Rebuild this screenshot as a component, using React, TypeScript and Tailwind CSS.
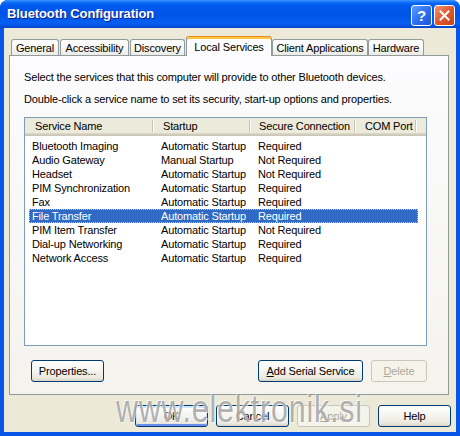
import type { ReactNode } from "react";

const services = [
  ["Bluetooth Imaging", "Automatic Startup", "Required"],
  ["Audio Gateway", "Manual Startup", "Not Required"],
  ["Headset", "Automatic Startup", "Not Required"],
  ["PIM Synchronization", "Automatic Startup", "Required"],
  ["Fax", "Automatic Startup", "Required"],
  ["File Transfer", "Automatic Startup", "Required"],
  ["PIM Item Transfer", "Automatic Startup", "Not Required"],
  ["Dial-up Networking", "Automatic Startup", "Required"],
  ["Network Access", "Automatic Startup", "Required"],
];

const tabs = [
  { label: "General", width: "w-[48px]" },
  { label: "Accessibility", width: "w-[69px]" },
  { label: "Discovery", width: "w-[55px]" },
  { label: "Local Services", width: "w-[86px]", active: true },
  { label: "Client Applications", width: "w-[96px]" },
  { label: "Hardware", width: "w-[56px]" },
];

function XpButton({
  children,
  width,
  disabled,
  isDefault,
}: {
  children: ReactNode;
  width: string;
  disabled?: boolean;
  isDefault?: boolean;
}) {
  const base = `${width} flex h-[22px] items-center justify-center rounded-[3px] border text-[11px] leading-none`;
  if (disabled) {
    return (
      <div
        className={`${base} border-[#c9c7ba] bg-[#f5f4ea] text-[#aca899]`}
      >
        {children}
      </div>
    );
  }
  return (
    <div
      className={`${base} border-[#003c74] bg-[linear-gradient(to_bottom,#ffffff_0%,#f6f5f0_45%,#ebe8de_85%,#d8d2c6_100%)] text-black ${
        isDefault
          ? "shadow-[inset_0_1px_0_1px_#cee7ff,inset_0_-1px_0_1px_#6b8eec]"
          : ""
      }`}
    >
      {children}
    </div>
  );
}

function HeaderCell({ label, width, pad }: { label: string; width: string; pad: string }) {
  return (
    <div className={`${width} flex h-full items-center justify-between ${pad}`}>
      <span>{label}</span>
      <span className="h-[12px] w-[2px] border-l border-r border-l-[#c7c5b2] border-r-white" />
    </div>
  );
}

export default function App() {
  return (
    <div
      className="relative h-[436px] w-[460px] overflow-hidden bg-white text-[11px] tracking-[-0.15px] text-black"
      style={{ fontFamily: '"Liberation Sans", Arial, sans-serif' }}
    >
      <div className="flex h-full flex-col rounded-t-[8px] bg-[#0856e8]">
        {/* title bar */}
        <div className="flex h-[28px] items-center justify-between rounded-t-[8px] bg-[linear-gradient(to_bottom,#3d95ff_0%,#0a6af8_10%,#0058ee_22%,#0054e8_55%,#0660f2_82%,#0550e0_93%,#0542c9_100%)] pl-[7px] pr-[5px]">
          <span className="text-[13px] font-bold tracking-[-0.1px] text-white [text-shadow:1px_1px_0_#0a1e8a]">
            Bluetooth Configuration
          </span>
          <div className="flex gap-[2px] pt-[3px]">
            <div className="flex h-[21px] w-[21px] items-center justify-center rounded-[3px] border border-white bg-[linear-gradient(135deg,#5d9dff_0%,#2a6cf0_55%,#1d55d8_100%)] text-[15px] font-bold leading-none text-white">
              ?
            </div>
            <div className="flex h-[21px] w-[21px] items-center justify-center rounded-[3px] border border-white bg-[linear-gradient(135deg,#f0937a_0%,#e0582e_50%,#c9411a_100%)]">
              <svg width="11" height="11" viewBox="0 0 11 11">
                <path d="M1.5 1.5 L9.5 9.5 M9.5 1.5 L1.5 9.5" stroke="white" strokeWidth="2" strokeLinecap="square" />
              </svg>
            </div>
          </div>
        </div>

        {/* client area */}
        <div className="mx-[4px] mb-[4px] flex flex-1 flex-col bg-[#ece9d8] pl-[5px] pt-[8px]">
          {/* tab strip */}
          <div className="relative z-10 ml-[2px] flex items-end">
            {tabs.map((tab, index) =>
              tab.active ? (
                <div
                  key={tab.label}
                  className={`${tab.width} ml-[1px] -mb-px flex h-[20px] items-start justify-center rounded-t-[3px] border border-b-0 border-[#919b9c] border-t-[#e68b2c] bg-[#fcfcfe] pt-[2px] shadow-[inset_0_2px_0_#ffc73c]`}
                >
                  {tab.label}
                </div>
              ) : (
                <div
                  key={tab.label}
                  className={`${tab.width} ${
                    index === 0 || index > 3 ? "" : "ml-[1px]"
                  } flex h-[16px] items-center justify-center rounded-t-[3px] border border-b-0 border-[#919b9c] bg-[linear-gradient(to_bottom,#ffffff_0%,#f7f7f4_50%,#ecebe6_100%)] pt-[1px]`}
                >
                  {tab.label}
                </div>
              ),
            )}
          </div>

          {/* tab panel */}
          <div className="flex h-[340px] w-[440px] flex-col border border-[#919b9c] bg-[linear-gradient(to_bottom,#fcfcfe,#f4f3ee)] pl-[14px]">
            <p className="mt-[15px] leading-[13px]">
              Select the services that this computer will provide to other Bluetooth devices.
            </p>
            <p className="mt-[9px] leading-[13px]">
              Double-click a service name to set its security, start-up options and properties.
            </p>

            {/* list view */}
            <div className="mt-[11px] h-[229px] w-[403px] border border-[#7f9db9] bg-white">
              <div className="flex h-[18px] bg-[linear-gradient(to_bottom,#ebeadb_0,#ebeadb_15px,#e2decd_15px,#d6d2c2_16px,#cbc7b8_17px)] pb-[2px]">
                <HeaderCell label="Service Name" width="w-[129px]" pad="pl-[10px]" />
                <HeaderCell label="Startup" width="w-[97px]" pad="pl-[9px]" />
                <HeaderCell label="Secure Connection" width="w-[105px]" pad="pl-[8px]" />
                <HeaderCell label="COM Port" width="w-[61px]" pad="pl-[9px]" />
              </div>
              <div className="pt-[3px]">
                {services.map(([name, startup, secure]) => {
                  const selected = name === "File Transfer";
                  return (
                    <div
                      key={name}
                      className={`ml-[4px] flex h-[14px] w-[389px] items-center leading-[14px] ${
                        selected
                          ? "bg-[#316ac5] text-white outline-1 -outline-offset-1 outline-dotted outline-[#f0c060]"
                          : ""
                      }`}
                    >
                      <span className="w-[125px] pl-[3px]">{name}</span>
                      <span className="w-[97px] pl-[7px]">{startup}</span>
                      <span className="w-[105px] pl-[7px]">{secure}</span>
                    </div>
                  );
                })}
              </div>
            </div>

            {/* panel buttons */}
            <div className="mt-[14px] flex w-[403px] items-center">
              <div className="ml-[7px]">
                <XpButton width="w-[73px]">Properties...</XpButton>
              </div>
              <div className="ml-auto flex gap-[8px]">
                <XpButton width="w-[105px]">
                  <span>
                    <span className="underline">A</span>dd Serial Service
                  </span>
                </XpButton>
                <XpButton width="w-[56px]" disabled>
                  <span>
                    <span className="underline">D</span>elete
                  </span>
                </XpButton>
              </div>
            </div>
          </div>

          {/* dialog buttons */}
          <div className="mt-[10px] flex justify-end gap-[8px] pr-[5px]">
            <XpButton width="w-[73px]" isDefault>
              OK
            </XpButton>
            <XpButton width="w-[73px]">Cancel</XpButton>
            <XpButton width="w-[73px]" disabled>
              <span>
                <span className="underline">A</span>pply
              </span>
            </XpButton>
            <XpButton width="w-[73px]">Help</XpButton>
          </div>
        </div>
      </div>

      {/* watermark */}
      <div className="pointer-events-none absolute left-[116px] top-[390px] origin-left scale-x-[0.8] text-[38px] leading-none tracking-[1px] text-[#6f6f6f]/55 [text-shadow:1px_1px_0_rgba(255,255,255,0.7),-1px_-1px_0_rgba(255,255,255,0.7)]">
        www.elektronik.si
      </div>
    </div>
  );
}
